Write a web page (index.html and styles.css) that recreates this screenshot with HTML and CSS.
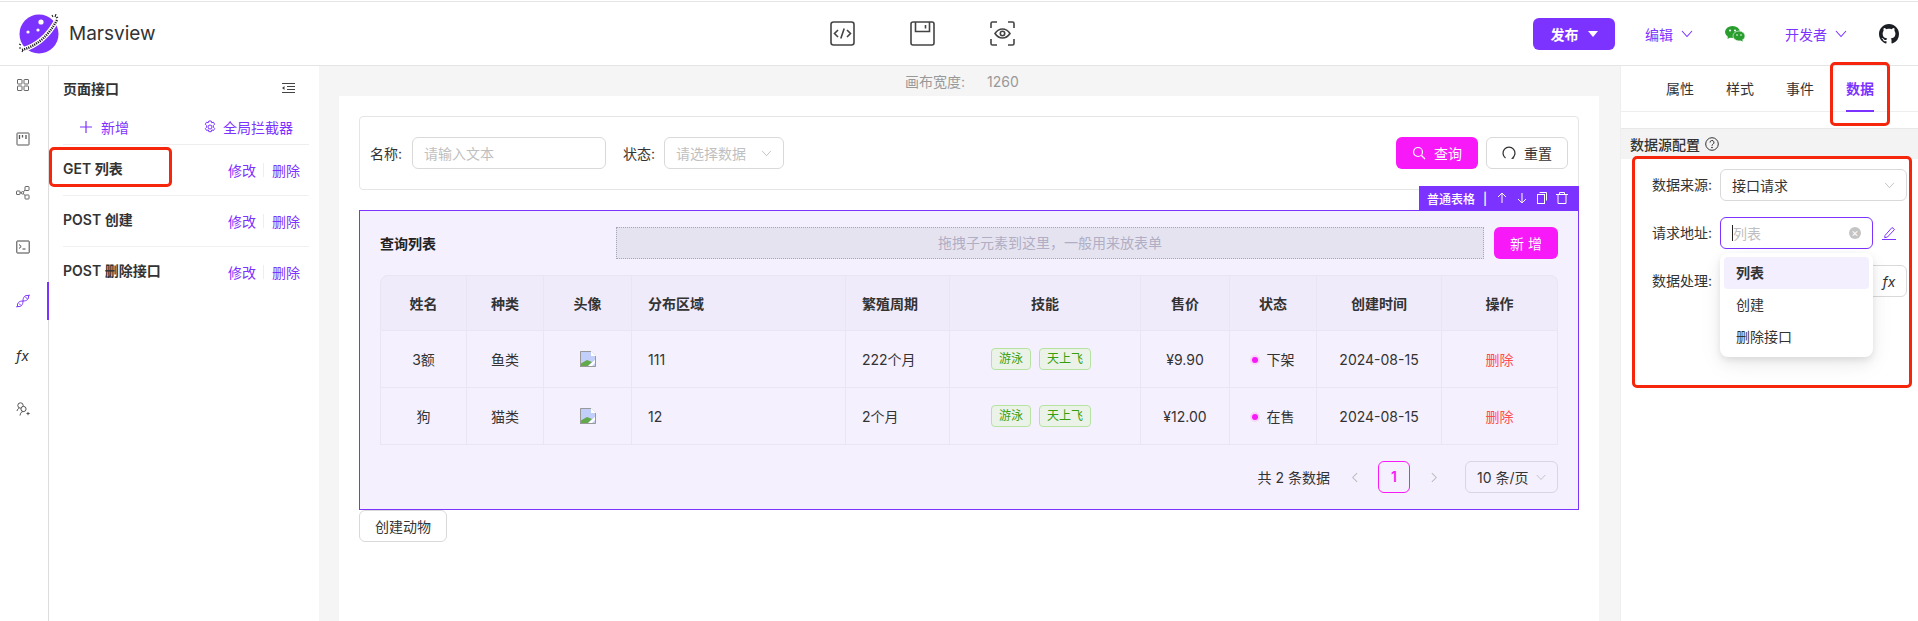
FILE: index.html
```html
<!DOCTYPE html>
<html lang="zh-CN">
<head>
    <meta charset="UTF-8">
    <meta name="viewport" content="width=device-width, initial-scale=1.0">
    <title>Marsview</title>
    <link rel="stylesheet" href="styles.css">
</head>
<body>

    <!-- Header -->
    <header class="topbar">
        <div class="brand">
            <svg class="logo" viewBox="0 0 40 40" width="40" height="40">
                <circle cx="20" cy="20" r="19.500" fill="#7d33ff"/>
                <circle cx="22" cy="8" r="2.600" fill="#fff"/>
                <circle cx="9" cy="18" r="1.600" fill="#fff"/>
                <circle cx="19" cy="16" r="1.600" fill="#fff"/>
                <path d="M3 36Q25 30 38 6" fill="none" stroke="#fff" stroke-width="5"/>
                <path d="M3 36Q25 30 38 6" fill="none" stroke="#222" stroke-width="2.400" stroke-dasharray="1.200 1"/>
                <path d="M33 1l1 2M37 0l-1 3M39 3l-2 1M0 30l2 1M0 34l2 0M3 38l1-2" stroke="#222" stroke-width="1.100"/>
            </svg>
            <span class="brand-name">Marsview</span>
        </div>
        <nav class="tools">
            <svg viewBox="0 0 25 25" width="25" height="25" fill="none" stroke="#444" stroke-width="1.600">
                <rect x="1" y="1" width="23" height="23" rx="2.500"/>
                <path d="M8 9l-3.500 3.500L8 16M17 9l3.500 3.500L17 16M14.200 7.500l-3.400 10"/>
            </svg>
            <svg viewBox="0 0 25 25" width="25" height="25" fill="none" stroke="#444" stroke-width="1.600">
                <path d="M1 3a2 2 0 0 1 2-2h19a2 2 0 0 1 2 2v19a2 2 0 0 1-2 2H3a2 2 0 0 1-2-2z"/>
                <path d="M5.500 1v9.500h14V1M15.500 4v3.500"/>
            </svg>
            <svg viewBox="0 0 25 25" width="25" height="25" fill="none" stroke="#444" stroke-width="1.600">
                <path d="M1 7V2.500A1.500 1.500 0 0 1 2.500 1H7M18 1h4.500A1.500 1.500 0 0 1 24 2.500V7M24 18v4.500a1.500 1.500 0 0 1-1.500 1.500H18M7 24H2.500A1.500 1.500 0 0 1 1 22.500V18"/>
                <path d="M5 12.500c2-3 4.500-4.500 7.500-4.500s5.500 1.500 7.500 4.500c-2 3-4.500 4.500-7.500 4.500S7 15.500 5 12.500z"/>
                <circle cx="12.500" cy="12.500" r="2.200"/>
            </svg>
        </nav>
        <div class="actions">
            <button class="btn-publish">发布<i class="caret"></i></button>
            <a class="menu-link">编辑<svg class="chev" viewBox="0 0 12 8" width="12" height="8"><path d="M1 1l5 5.500L11 1" fill="none" stroke="currentColor" stroke-width="1.100"/></svg></a>
            <svg class="wechat" viewBox="0 0 20 16" width="20" height="16">
                <ellipse cx="7.500" cy="6" rx="7.500" ry="6" fill="#2a9d2f"/>
                <path d="M3 10l-.5 3 3.500-2z" fill="#2a9d2f"/>
                <ellipse cx="14" cy="10" rx="6" ry="5" fill="#2a9d2f" stroke="#fff" stroke-width=".6"/>
                <path d="M17 13.500l1 2-3-1z" fill="#2a9d2f"/>
                <circle cx="5" cy="4.500" r="1" fill="#fff"/>
                <circle cx="10" cy="4.500" r="1" fill="#fff"/>
                <circle cx="12" cy="9" r=".8" fill="#fff"/>
                <circle cx="16" cy="9" r=".8" fill="#fff"/>
            </svg>
            <a class="menu-link dev-link">开发者<svg class="chev" viewBox="0 0 12 8" width="12" height="8"><path d="M1 1l5 5.500L11 1" fill="none" stroke="currentColor" stroke-width="1.100"/></svg></a>
            <svg class="github" viewBox="0 0 16 16" width="20" height="20"><path fill="#1b1f23" d="M8 0C3.580 0 0 3.580 0 8c0 3.540 2.290 6.530 5.470 7.590.4.070.55-.17.55-.38 0-.19-.01-.82-.01-1.490-2.010.37-2.530-.49-2.690-.94-.09-.23-.48-.94-.82-1.130-.28-.15-.68-.52-.01-.53.63-.01 1.080.58 1.230.82.72 1.210 1.870.87 2.330.66.07-.52.28-.87.51-1.070-1.780-.2-3.640-.89-3.640-3.950 0-.87.31-1.590.82-2.150-.08-.2-.36-1.020.08-2.120 0 0 .67-.21 2.200.82.64-.18 1.320-.27 2-.27.68 0 1.360.09 2 .27 1.530-1.040 2.200-.82 2.200-.82.44 1.100.16 1.920.08 2.120.51.56.82 1.270.82 2.150 0 3.070-1.870 3.750-3.650 3.950.29.25.54.73.54 1.480 0 1.070-.01 1.930-.01 2.200 0 .21.15.46.55.38A8.013 8.013 0 0 0 16 8c0-4.420-3.580-8-8-8z"/></svg>
        </div>
    </header>

    <div class="workspace">

        <!-- Icon rail -->
        <aside class="rail">
            <div class="rail-item">
                <svg viewBox="0 0 14 14" width="14" height="14" fill="none" stroke="#666"><rect x="1.500" y="1.500" width="4.500" height="4.500" rx=".5"/><rect x="8" y="1.500" width="4.500" height="4.500" rx=".5"/><rect x="1.500" y="8" width="4.500" height="4.500" rx=".5"/><rect x="8" y="8" width="4.500" height="4.500" rx=".5"/></svg>
            </div>
            <div class="rail-item">
                <svg viewBox="0 0 14 14" width="14" height="14" fill="none" stroke="#555"><rect x="1" y="1" width="12" height="12" rx=".5"/><path d="M3.500 3v4M6.500 3v2.500M10 3v4" stroke-width="1.300"/></svg>
            </div>
            <div class="rail-item">
                <svg viewBox="0 0 14 14" width="14" height="14" fill="none" stroke="#666"><rect x=".5" y="5" width="3.500" height="3.500" rx=".5"/><rect x="9" y=".5" width="4" height="4" rx=".5"/><rect x="9" y="9" width="4" height="4" rx=".5"/><circle cx="6.500" cy="6.800" r="1.200"/><path d="M4 6.800h1.300M7.400 6l1.600-2M7.400 7.600l1.600 2"/></svg>
            </div>
            <div class="rail-item">
                <svg viewBox="0 0 14 14" width="14" height="14" fill="none" stroke="#444"><rect x=".8" y="1" width="12.400" height="12" rx=".5"/><path d="M3 4.500l2.200 2-2.200 2M6.500 9h3"/></svg>
            </div>
            <div class="rail-item active">
                <svg viewBox="0 0 14 14" width="14" height="14" fill="none" stroke="#7d33ff"><path d="M.5 13l1.500-.5C5 13 7 11 7 7 3 7 1 9 1.500 12zM13.500 1l-1.500.5C9 1 7 3 7 7c4 0 6-2 5.500-5zM3 9.500l2 2M9 2.500l2.500 2.500"/></svg>
            </div>
            <div class="rail-item"><span class="fx">fx</span></div>
            <div class="rail-item">
                <svg viewBox="0 0 14 14" width="14" height="14" fill="none" stroke="#555"><circle cx="4.500" cy="3.500" r="2.700"/><circle cx="7.500" cy="7" r="2.600" fill="#fff"/><path d="M1 9c.4-1.500 1.200-2.500 2.200-3M4 13.500c.4-2.500 1.500-4 3.500-4M10.500 11.500h3.200M12 10v3.200"/></svg>
            </div>
        </aside>

        <!-- Interface list -->
        <section class="api-panel">
            <div class="api-title">
                <span>页面接口</span>
                <svg viewBox="0 0 14 12" width="14" height="12" fill="none" stroke="#444"><path d="M1 1.500h13M6 4.500h8M6 7.500h8M1 10.500h13"/><path d="M3.500 4L1 6l2.500 2z" fill="#444" stroke="none"/></svg>
            </div>
            <div class="api-tools">
                <a class="tool-add"><svg viewBox="0 0 12 12" width="12" height="12"><path d="M6 0v12M0 6h12" stroke="#7d33ff" stroke-width="1.200"/></svg>新增</a>
                <a class="tool-global"><svg viewBox="0 0 14 14" width="14" height="14" fill="none" stroke="#7d33ff"><path d="M5.800 1h2.400l.5 1.800 1.700-.6 1.200 2-1.300 1.300.1 1.700 1.300 1.300-1.200 2-1.700-.6-.5 1.800H5.800l-.5-1.800-1.700.6-1.200-2 1.300-1.300-.1-1.700-1.300-1.300 1.200-2 1.700.6z"/><circle cx="7" cy="7" r="2"/></svg>全局拦截器</a>
            </div>
            <div class="api-item">
                <span class="api-name">GET 列表</span>
                <span class="api-links"><a>修改</a><i></i><a>删除</a></span>
            </div>
            <div class="api-item">
                <span class="api-name">POST 创建</span>
                <span class="api-links"><a>修改</a><i></i><a>删除</a></span>
            </div>
            <div class="api-item">
                <span class="api-name">POST 删除接口</span>
                <span class="api-links"><a>修改</a><i></i><a>删除</a></span>
            </div>
        </section>

        <!-- Canvas -->
        <main class="canvas">
            <div class="canvas-width"><span>画布宽度:</span><span>1260</span></div>
            <div class="page">

                <div class="search-card">
                    <label class="field-label">名称:</label>
                    <div class="input name-input">请输入文本</div>
                    <label class="field-label status-label">状态:</label>
                    <div class="input status-select">请选择数据
                        <svg viewBox="0 0 12 8" width="11" height="7"><path d="M1 1l5 5.500L11 1" fill="none" stroke="#bbb"/></svg>
                    </div>
                    <button class="btn btn-primary search-btn">
                        <svg viewBox="0 0 14 14" width="14" height="14" fill="none" stroke="#fff" stroke-width="1.200"><circle cx="6" cy="6" r="4.500"/><path d="M9.500 9.500L13 13"/></svg>查询</button>
                    <button class="btn reset-btn">
                        <svg viewBox="0 0 14 14" width="14" height="14" fill="none" stroke="#333" stroke-width="1.300"><path d="M3.500 12A6 6 0 1 1 10.500 12"/><path d="M9.500 12.500l2-.2.300-1.800" stroke-width="1"/></svg>重置</button>
                </div>

                <div class="table-block">
                    <div class="block-bar">
                        <span>普通表格</span><span class="bar-sep">|</span>
                        <svg viewBox="0 0 12 12" width="12" height="12" fill="none" stroke="#fff"><path d="M6 11V1M2 5l4-4 4 4"/></svg>
                        <svg viewBox="0 0 12 12" width="12" height="12" fill="none" stroke="#fff"><path d="M6 1v10M2 7l4 4 4-4"/></svg>
                        <svg viewBox="0 0 12 12" width="12" height="12" fill="none" stroke="#fff"><rect x="1.500" y="2.500" width="7" height="9"/><path d="M3.500 .5h7v8"/></svg>
                        <svg viewBox="0 0 12 12" width="12" height="12" fill="none" stroke="#fff"><path d="M0 2.500h12M3.500 2.500V.5h5v2M2 2.500v9h8v-9"/></svg>
                    </div>

                    <div class="block-head">
                        <h3>查询列表</h3>
                        <div class="drop-slot">拖拽子元素到这里，一般用来放表单</div>
                        <button class="btn btn-primary add-btn">新 增</button>
                    </div>

                    <table class="grid">
                        <colgroup>
                            <col class="c1"><col class="c2"><col class="c3"><col class="c4"><col class="c5">
                            <col class="c6"><col class="c7"><col class="c8"><col class="c9"><col class="c10">
                        </colgroup>
                        <thead>
                            <tr>
                                <th>姓名</th><th>种类</th><th>头像</th><th class="left">分布区域</th><th class="left">繁殖周期</th>
                                <th>技能</th><th>售价</th><th>状态</th><th>创建时间</th><th>操作</th>
                            </tr>
                        </thead>
                        <tbody>
                            <tr>
                                <td>3额</td><td>鱼类</td>
                                <td><svg class="broken" viewBox="0 0 16 16" width="16" height="16"><path d="M0 0h11l5 5v11H0z" fill="#c3cffb"/><path d="M0 16V13l7-4 5 2-5 5z" fill="#63a84a"/><path d="M7 16l9-8v3l-5 5z" fill="#fff"/><path d="M.5 .5h10.300l4.700 4.700v10.300H.5z" fill="none" stroke="#999"/><path d="M11 0v5h5z" fill="#fff"/></svg></td>
                                <td class="left">111</td><td class="left">222个月</td>
                                <td><span class="tag">游泳</span><span class="tag">天上飞</span></td>
                                <td>¥9.90</td>
                                <td><i class="dot"></i>下架</td>
                                <td>2024-08-15</td>
                                <td class="danger">删除</td>
                            </tr>
                            <tr>
                                <td>狗</td><td>猫类</td>
                                <td><svg class="broken" viewBox="0 0 16 16" width="16" height="16"><path d="M0 0h11l5 5v11H0z" fill="#c3cffb"/><path d="M0 16V13l7-4 5 2-5 5z" fill="#63a84a"/><path d="M7 16l9-8v3l-5 5z" fill="#fff"/><path d="M.5 .5h10.300l4.700 4.700v10.300H.5z" fill="none" stroke="#999"/><path d="M11 0v5h5z" fill="#fff"/></svg></td>
                                <td class="left">12</td><td class="left">2个月</td>
                                <td><span class="tag">游泳</span><span class="tag">天上飞</span></td>
                                <td>¥12.00</td>
                                <td><i class="dot"></i>在售</td>
                                <td>2024-08-15</td>
                                <td class="danger">删除</td>
                            </tr>
                        </tbody>
                    </table>

                    <div class="pager">
                        <span class="pager-total">共 2 条数据</span>
                        <svg class="pager-arrow prev" viewBox="0 0 8 12" width="7" height="11"><path d="M7 1L2 6l5 5" fill="none" stroke="#bbb" stroke-width="1.200"/></svg>
                        <span class="pager-num">1</span>
                        <svg class="pager-arrow next" viewBox="0 0 8 12" width="7" height="11"><path d="M1 1l5 5-5 5" fill="none" stroke="#bbb" stroke-width="1.200"/></svg>
                        <span class="pager-size">10 条/页<svg viewBox="0 0 12 8" width="10" height="7"><path d="M1 1l5 5.500L11 1" fill="none" stroke="#bbb"/></svg></span>
                    </div>
                </div>

                <button class="btn create-btn">创建动物</button>
            </div>
        </main>

        <!-- Property panel -->
        <aside class="props">
            <div class="tabs">
                <span>属性</span><span>样式</span><span>事件</span><span class="active">数据</span>
            </div>
            <div class="props-title">数据源配置
                <svg viewBox="0 0 14 14" width="14" height="14" fill="none" stroke="#333"><circle cx="7" cy="7" r="6.300"/><path d="M5 5.500a2 2 0 1 1 3 1.700c-.7.400-1 .8-1 1.500"/><circle cx="7" cy="10.500" r=".4" fill="#333"/></svg>
            </div>
            <div class="props-form">
                <div class="form-row">
                    <label>数据来源:</label>
                    <div class="input wide">接口请求
                        <svg viewBox="0 0 12 8" width="11" height="7"><path d="M1 1l5 5.500L11 1" fill="none" stroke="#bbb"/></svg>
                    </div>
                </div>
                <div class="form-row">
                    <label>请求地址:</label>
                    <div class="url-wrap">
                        <div class="input url-input"><span class="caret-line"></span>列表<i class="clear">×</i></div>
                        <ul class="dropdown">
                            <li class="selected">列表</li>
                            <li>创建</li>
                            <li>删除接口</li>
                        </ul>
                    </div>
                    <svg class="pen" viewBox="0 0 14 14" width="14" height="14" fill="none" stroke="#7d33ff"><path d="M3 9.500L10 1.500l2.500 2L5.500 11l-2.800.7zM0 13.500h14"/></svg>
                </div>
                <div class="form-row">
                    <label>数据处理:</label>
                    <div class="input wide fx-input"><span class="fx-btn">fx</span></div>
                </div>
            </div>
        </aside>
    </div>

    <!-- Red annotation boxes drawn over the screenshot -->
    <div class="mark mark-api"></div>
    <div class="mark mark-tab"></div>
    <div class="mark mark-form"></div>

</body>
</html>
```

FILE: styles.css
```css
* {
    box-sizing: border-box;
}

html, body {
    height: 100%;
}

body {
    margin: 0;
    padding-top: 1px;
    overflow: hidden;
    position: relative;
    font-family: Inter, "Noto Sans CJK SC", sans-serif;
    font-size: 14px;
    color: #333;
    background-color: #fff;
}

a {
    cursor: pointer;
}

svg {
    display: block;
    flex-shrink: 0;
}

/* header */
.topbar {
    height: 65px;
    display: flex;
    align-items: center;
    border-top: 1px solid #e5e5e5;
    border-bottom: 1px solid #e5e5e5;
    padding: 0 19px;
}

.brand {
    width: 811px;
    display: flex;
    align-items: center;
    gap: 10px;
}

.brand-name {
    font-size: 19px;
    color: #333;
}

.tools {
    display: flex;
    gap: 55px;
}

.actions {
    margin-left: auto;
    display: flex;
    align-items: center;
}

.btn-publish {
    width: 82px;
    height: 32px;
    border: none;
    border-radius: 6px;
    background-color: #7d33ff;
    color: #fff;
    font: inherit;
    font-weight: 600;
    display: flex;
    align-items: center;
    justify-content: center;
    gap: 9px;
}

.caret {
    width: 0;
    height: 0;
    border-left: 5px solid transparent;
    border-right: 5px solid transparent;
    border-top: 6px solid #fff;
}

.menu-link {
    margin-left: 30px;
    display: flex;
    align-items: center;
    gap: 8px;
    color: #7d33ff;
}

.wechat {
    margin-left: 32px;
}

.dev-link {
    margin-left: 40px;
}

.github {
    margin-left: 32px;
}

/* layout */
.workspace {
    display: flex;
    height: calc(100% - 65px);
}

/* rail */
.rail {
    width: 49px;
    flex-shrink: 0;
    border-right: 1px solid #ddd;
    display: flex;
    flex-direction: column;
    gap: 16px;
}

.rail-item {
    height: 38px;
    padding-left: 16px;
    display: flex;
    align-items: center;
    position: relative;
}

.rail-item.active::after {
    content: "";
    position: absolute;
    right: -1px;
    top: 0;
    width: 2px;
    height: 38px;
    background-color: #7d33ff;
}

.fx {
    font-style: italic;
    font-size: 14px;
    color: #333;
}

/* interface list */
.api-panel {
    width: 270px;
    flex-shrink: 0;
    padding: 0 10px 0 14px;
}

.api-title {
    height: 46px;
    display: flex;
    align-items: center;
    justify-content: space-between;
    padding: 0 14px 2px 0;
    font-weight: 600;
}

.api-tools {
    height: 33px;
    display: flex;
    align-items: center;
    border-bottom: 1px solid #eee;
    padding-bottom: 2px;
    color: #7d33ff;
}

.tool-add,
.tool-global {
    display: flex;
    align-items: center;
    gap: 9px;
}

.tool-add {
    margin-left: 17px;
}

.tool-global {
    margin-left: 74px;
    gap: 6px;
}

.api-item {
    height: 51px;
    display: flex;
    align-items: center;
    justify-content: space-between;
    border-bottom: 1px solid #f0f0f0;
    padding-right: 9px;
}

.api-item:last-child {
    border-bottom: none;
}

.api-name {
    font-weight: 600;
    margin-bottom: 5px;
}

.api-links {
    display: flex;
    align-items: center;
    margin-bottom: 1px;
    color: #7d33ff;
}

.api-links i {
    width: 1px;
    height: 14px;
    margin: 0 8px 0 7px;
    background-color: #eee;
}

/* canvas */
.canvas {
    width: 1301px;
    flex-shrink: 0;
    background-color: #f5f5f5;
    display: flex;
    flex-direction: column;
}

.canvas-width {
    height: 30px;
    display: flex;
    align-items: center;
    gap: 22px;
    padding-left: 586px;
    color: #999;
}

.page {
    width: 1260px;
    flex-grow: 1;
    margin-left: 20px;
    padding: 20px;
    background-color: #fff;
}

.search-card {
    height: 74px;
    border: 1px solid #e5e5e5;
    border-radius: 4px;
    padding: 0 10px;
    display: flex;
    align-items: center;
}

.field-label {
    width: 42px;
    white-space: nowrap;
}

.status-label {
    margin-left: 17px;
    width: 41px;
}

.input {
    height: 32px;
    border: 1px solid #d9d9d9;
    border-radius: 6px;
    padding: 0 11px;
    background-color: #fff;
    display: flex;
    align-items: center;
    justify-content: space-between;
    color: #333;
}

.name-input {
    width: 194px;
    color: #bfbfbf;
}

.status-select {
    width: 120px;
    color: #bfbfbf;
}

.btn {
    height: 32px;
    border: 1px solid #d9d9d9;
    border-radius: 6px;
    background-color: #fff;
    color: #333;
    font: inherit;
    display: inline-flex;
    align-items: center;
    justify-content: center;
    gap: 8px;
}

.btn-primary {
    border: none;
    background-color: #f719f7;
    color: #fff;
}

.search-btn {
    width: 82px;
    margin-left: auto;
}

.reset-btn {
    width: 82px;
    margin-left: 8px;
}

/* table block */
.table-block {
    position: relative;
    height: 300px;
    margin-top: 20px;
    border: 1px solid #7d33ff;
    background-color: #f4f0fe;
    padding: 16px 20px;
}

.block-bar {
    position: absolute;
    top: -25px;
    right: -1px;
    width: 160px;
    height: 24px;
    background-color: #7d33ff;
    color: #fff;
    font-size: 12px;
    font-weight: 500;
    display: flex;
    align-items: center;
    gap: 8px;
    padding-left: 8px;
}

.bar-sep {
    margin: 0 1px 0 0;
}

.block-head {
    height: 32px;
    display: flex;
    align-items: center;
}

.block-head h3 {
    width: 236px;
    margin: 0;
    font-size: 14px;
    font-weight: 600;
    color: #222;
}

.drop-slot {
    width: 868px;
    height: 32px;
    border: 1px dotted #a8a6bb;
    background-color: #e6e3f0;
    color: #b0aec4;
    text-align: center;
    line-height: 30px;
}

.add-btn {
    width: 64px;
    margin-left: 10px;
}

.grid {
    width: 1178px;
    margin-top: 16px;
    table-layout: fixed;
    border-collapse: separate;
    border-spacing: 0;
    color: #333;
}

.c1 { width: 87px; }
.c2 { width: 77px; }
.c3 { width: 88px; }
.c4 { width: 214px; }
.c5 { width: 104px; }
.c6 { width: 191px; }
.c7 { width: 89px; }
.c8 { width: 87px; }
.c9 { width: 125px; }
.c10 { width: 116px; }

.grid th,
.grid td {
    text-align: center;
    padding: 0;
    border-right: 1px solid #e9e5f3;
    border-bottom: 1px solid #e9e5f3;
}

.grid th:first-child,
.grid td:first-child {
    border-left: 1px solid #e9e5f3;
}

.grid th {
    height: 56px;
    background-color: #efebfa;
    font-weight: 600;
    border-top: 1px solid #e9e5f3;
}

.grid th:first-child {
    border-top-left-radius: 8px;
}

.grid th:last-child {
    border-top-right-radius: 8px;
}

.grid td {
    height: 57px;
}

.grid .left {
    text-align: left;
    padding-left: 16px;
}

.broken {
    margin: 0 auto;
}

.tag {
    display: inline-block;
    height: 22px;
    line-height: 20px;
    padding: 0 7px;
    border: 1px solid #b7e3a0;
    border-radius: 4px;
    background-color: #ebf3e9;
    color: #389e0d;
    font-size: 12px;
    margin-right: 8px;
}

.dot {
    display: inline-block;
    width: 6px;
    height: 6px;
    margin-right: 9px;
    vertical-align: 2px;
    border-radius: 50%;
    background-color: #f719f7;
    box-shadow: 0 0 0 2px #f7d6f9;
}

.danger {
    color: #ff4d4f;
}

.pager {
    margin-top: 16px;
    height: 32px;
    display: flex;
    align-items: center;
    justify-content: flex-end;
}

.pager-arrow.prev {
    margin: 0 20px 0 21px;
}

.pager-arrow.next {
    margin: 0 27px 0 21px;
}

.pager-num {
    width: 32px;
    height: 32px;
    line-height: 30px;
    text-align: center;
    border: 1px solid #f719f7;
    border-radius: 6px;
    color: #f719f7;
    font-weight: 600;
}

.pager-size {
    width: 93px;
    height: 32px;
    border: 1px solid #d9d6e4;
    border-radius: 6px;
    display: flex;
    align-items: center;
    justify-content: space-between;
    padding: 0 11px;
}

.create-btn {
    width: 88px;
    display: flex;
}

/* property panel */
.props {
    flex-grow: 1;
    border-left: 1px solid #eee;
}

.tabs {
    height: 46px;
    display: flex;
    align-items: center;
    gap: 32px;
    padding-left: 45px;
    border-bottom: 1px solid #eee;
    position: relative;
}

.tabs span {
    margin-bottom: 2px;
}

.tabs .active {
    color: #7d33ff;
    font-weight: 600;
    position: relative;
    align-self: stretch;
    display: flex;
    align-items: center;
}

.tabs .active::after {
    content: "";
    position: absolute;
    left: 0;
    right: 0;
    bottom: -3px;
    height: 2px;
    background-color: #7d33ff;
}

.props-title {
    height: 31px;
    margin-top: 16px;
    padding-left: 9px;
    display: flex;
    align-items: center;
    gap: 5px;
    background-color: #f3f3f3;
    border-top: 1px solid #e8e8e8;
    font-weight: 500;
}

.props-form {
    padding: 10px 11px 0 0;
    display: flex;
    flex-direction: column;
    gap: 16px;
}

.form-row {
    display: flex;
    align-items: center;
    height: 32px;
}

.form-row label {
    width: 99px;
    margin-bottom: 2px;
    padding-right: 8px;
    text-align: right;
    flex-shrink: 0;
}

.wide {
    width: 187px;
}

.url-wrap {
    position: relative;
    width: 153px;
}

.url-input {
    border-color: #7d33ff;
    color: #bfbfbf;
    justify-content: flex-start;
    padding-right: 0;
}

.caret-line {
    width: 1px;
    height: 16px;
    background-color: #222;
}

.clear {
    width: 12px;
    height: 12px;
    margin-left: auto;
    margin-right: 11px;
    border-radius: 50%;
    background-color: #c4c4c4;
    color: #fff;
    font-size: 11px;
    font-style: normal;
    line-height: 12px;
    text-align: center;
}

.pen {
    margin-left: 9px;
}

.dropdown {
    position: absolute;
    z-index: 2;
    top: 36px;
    left: 0;
    width: 153px;
    margin: 0;
    padding: 4px;
    list-style: none;
    background-color: #fff;
    border-radius: 8px;
    box-shadow: 0 6px 16px rgba(0, 0, 0, 0.06), 0 3px 6px rgba(0, 0, 0, 0.08), 0 9px 28px rgba(0, 0, 0, 0.04);
}

.dropdown li {
    height: 32px;
    line-height: 32px;
    padding-left: 12px;
    border-radius: 4px;
}

.dropdown .selected {
    background-color: #f4effe;
    font-weight: 600;
}

.fx-input {
    justify-content: flex-end;
    padding-right: 0;
}

.fx-btn {
    width: 34px;
    text-align: center;
    font-style: italic;
}

/* red annotation boxes */
.mark {
    position: absolute;
    z-index: 3;
    border: 3px solid #f5260b;
    border-radius: 5px;
    pointer-events: none;
}

.mark-api {
    left: 49px;
    top: 147px;
    width: 123px;
    height: 40px;
}

.mark-tab {
    left: 1830px;
    top: 62px;
    width: 60px;
    height: 64px;
}

.mark-form {
    left: 1632px;
    top: 156px;
    width: 280px;
    height: 232px;
}
```
